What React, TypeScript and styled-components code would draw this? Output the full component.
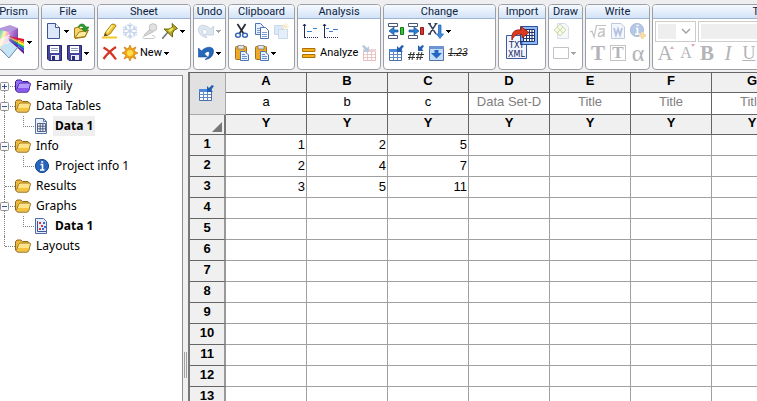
import React from "react";
import styled, { createGlobalStyle, css } from "styled-components";

const ribbonFont = 'Roboto, "Liberation Sans", sans-serif';
const treeFont = '"Noto Sans", "Open Sans", sans-serif';
const gridFont = '"Liberation Sans", Arial, sans-serif';

const GlobalStyle = createGlobalStyle`
  * { box-sizing: border-box; }
  body { margin: 0; background: #f0f0f0; color: #000; font: 12px ${treeFont}; overflow: hidden; }
  ul { list-style: none; margin: 0; padding: 0; }
  button { font: inherit; color: inherit; background: none; border: 0; padding: 0; margin: 0; }
  svg { display: block; flex: none; }
`;

/* ---------- shell ---------- */

const Window = styled.div`
  display: flex;
  flex-direction: column;
  height: 100vh;
  overflow: hidden;
  background: #f0f0f0;
`;

const TitleEdge = styled.div`
  height: 4px;
  flex: none;
  background: #eeeef0;
`;

const Ribbon = styled.header`
  display: flex;
  flex: none;
  gap: 2px;
  margin-left: -12px;
  height: 68px;
`;

const Workspace = styled.main`
  display: flex;
  flex: 1;
  min-height: 0;
`;

/* ---------- ribbon ---------- */

const Panel = styled.section<{ $width: number }>`
  flex: none;
  width: ${(p) => p.$width}px;
  height: 66px;
  border: 1px solid #9c9fa6;
  border-radius: 4px;
  background: #fff;
  overflow: hidden;
`;

const PanelTitle = styled.h2`
  margin: 0;
  height: 14px;
  border-bottom: 1px solid #9fb4d2;
  background: linear-gradient(#f6faff, #d3e3f8);
  color: #0c2340;
  font: 400 11px/14px ${ribbonFont};
  text-align: center;
  white-space: nowrap;
`;

const PanelBody = styled.div<{ $inset?: number }>`
  padding: 1px 0 0 ${(p) => p.$inset ?? 4}px;
`;

const ToolRow = styled.div<{ $gap?: number; $inset?: number }>`
  display: flex;
  align-items: center;
  height: 22px;
  gap: ${(p) => p.$gap ?? 4}px;
  padding-left: ${(p) => p.$inset ?? 0}px;
`;

const Tool = styled.button<{ $faded?: boolean }>`
  display: flex;
  align-items: center;
  gap: 2px;
  flex: none;
  opacity: ${(p) => (p.$faded ? 0.35 : 1)};
`;

const ToolText = styled.span`
  font: 11px/16px ${ribbonFont};
  white-space: nowrap;
`;

const BigTool = styled(Tool)<{ $left: number }>`
  height: 44px;
  padding-left: ${(p) => p.$left}px;
`;

const Letter = styled.button<{ $size: number; $bold?: boolean; $italic?: boolean; $underline?: boolean }>`
  position: relative;
  width: 16px;
  flex: none;
  color: #b4b4b8;
  font: ${(p) => (p.$italic ? "italic" : "normal")} ${(p) => (p.$bold ? 700 : 400)} ${(p) => p.$size}px/20px
    "Liberation Serif", serif;
  text-decoration: ${(p) => (p.$underline ? "underline" : "none")};
  text-align: center;
`;

const FramedLetter = styled(Letter)`
  height: 16px;
  border: 1px solid #c4c4c8;
  line-height: 14px;
`;

const SizeMark = styled.i<{ $down?: boolean }>`
  position: absolute;
  top: 1px;
  right: -1px;
  border: 2px solid transparent;
  ${(p) =>
    p.$down
      ? css`
          border-top: 3px solid #e0a9b5;
        `
      : css`
          border-bottom: 3px solid #e0a9b5;
        `}
`;

const FieldBox = styled.label<{ $width: number }>`
  display: flex;
  align-items: center;
  justify-content: space-between;
  flex: none;
  width: ${(p) => p.$width}px;
  height: 21px;
  padding: 0 4px 0 2px;
  border: 1px solid #ccc;
  background: #fff;
`;

const Field = styled.select<{ $width: number }>`
  appearance: none;
  width: ${(p) => p.$width}px;
  height: 15px;
  border: 0;
  background: #eee;
`;

const Caret = () => (
  <svg width="5" height="3" viewBox="0 0 5 3" shapeRendering="crispEdges">
    <path d="M0 0H5V1H4V2H3V3H2V2H1V1H0Z" fill="#000" />
  </svg>
);

/* ---------- icons ---------- */

const Svg = ({ children }: { children: React.ReactNode }) => (
  <svg width="16" height="16" viewBox="0 0 16 16" fill="none">
    {children}
  </svg>
);

const PrismIcon = () => (
  <svg width="25" height="34" viewBox="0 0 25 34">
    <defs>
      <linearGradient id="prismLeft" x1="0" y1="0" x2="1" y2="1">
        <stop offset="0" stopColor="#5cc8c0" />
        <stop offset=".3" stopColor="#fff8a8" />
        <stop offset=".5" stopColor="#f6a8c4" />
        <stop offset=".75" stopColor="#9aa8ee" />
        <stop offset="1" stopColor="#c9f0f4" />
      </linearGradient>
      <linearGradient id="prismRight" x1="0" y1="0" x2="1" y2="1">
        <stop offset="0" stopColor="#d79aee" />
        <stop offset="1" stopColor="#4c128c" />
      </linearGradient>
    </defs>
    <path d="M0 3L10 0L18 3L10 7H0Z" fill="#b498dc" />
    <path d="M0 5L9 7V33L0 24Z" fill="url(#prismLeft)" />
    <path d="M9 7L18 3V22L9 33Z" fill="url(#prismRight)" />
    <path d="M0 22L9 16L18 22L9 33Z" fill="#c5e4f6" />
    <path d="M0 14L10 9L9 18L0 21Z" fill="#fff" opacity=".6" />
    <path d="M8 11L24 14V17Z" fill="#e5122d" />
    <path d="M8 12L24 17V19Z" fill="#f98a12" />
    <path d="M8 12L24 19V21Z" fill="#f8ef26" />
    <path d="M8 13L24 21V23Z" fill="#21b34b" />
    <path d="M8 13L24 23V26Z" fill="#2353d8" />
    <path d="M8 14L24 26V29Z" fill="#5c1896" />
    <path d="M0 24L9 33L18 22" fill="none" stroke="#6e8fb4" />
  </svg>
);

const NewDocIcon = () => (
  <Svg>
    <path d="M1.500 .5H9.500L13.500 4.500V15.500H1.500Z" fill="#dce8fa" stroke="#3e5590" />
    <path d="M9.500 .5V4.500H13.500" fill="#fff" stroke="#3e5590" />
  </Svg>
);

const OpenIcon = () => (
  <Svg>
    <path d="M1.500 14V5L6 4L7 6L11 5V8L15.500 7L12 14L2 15.500Z" fill="#f3d66b" stroke="#a37a14" />
    <path d="M2 15L6 9L15 7.500L12 13.500Z" fill="#fbeb9e" stroke="#a37a14" />
    <path d="M5 4C7 0 11 0 13 4H16L12.500 9L8.500 6L11 5C10 3 8 2.500 5 4Z" fill="#27a02a" stroke="#16681a" strokeWidth=".6" />
  </Svg>
);

const DiskIcon = () => (
  <Svg>
    <path d="M1.500 .5H15.500V15.500H3L1.500 14Z" fill="#45459e" stroke="#27276b" />
    <path d="M4 1H13V8H4Z" fill="#fff" />
    <path d="M5 3.500H12M5 5.500H12" stroke="#8f97bd" />
    <path d="M5 10H13V15H5Z" fill="#e9ecf7" />
    <path d="M6 11H9V15H6Z" fill="#2e2e7c" />
  </Svg>
);

const PencilIcon = () => (
  <Svg>
    <path d="M3 10L9.500 1.500C11 .5 14 1.500 14 3L8 11L4 13Z" fill="#f2c52a" stroke="#9c7410" strokeWidth=".9" />
    <path d="M5 9.500L10.500 2.500" stroke="#fff0a0" strokeWidth="1.500" />
    <path d="M3 10L1.500 13.500L5.500 12.500Z" fill="#5b4a22" />
    <path d="M0 14.500H15" stroke="#f0c828" strokeWidth="2" />
  </Svg>
);

const SnowIcon = () => (
  <Svg>
    <path
      d="M8 0V16M1 4L15 12M1 12L15 4M5.500 1.500L8 4L10.500 1.500M5.500 14.500L8 12L10.500 14.500M1 7L4.500 6L3.500 2.500M15 9L11.500 10L12.500 13.500M15 7L11.500 6L12.500 2.500M1 9L4.500 10L3.500 13.500"
      stroke="#5c88cc"
      strokeWidth="1.400"
    />
  </Svg>
);

const MicIcon = () => (
  <Svg>
    <path d="M8 6L11 9L3 13L2 12Z" fill="#888" stroke="#555" />
    <circle cx="11" cy="4.500" r="3.800" fill="#aaa" stroke="#555" />
    <path d="M3 13C0 13 0 15.500 3 15.500H11C14 15.500 13 12 10 12.500" stroke="#666" />
  </Svg>
);

const PinIcon = () => (
  <Svg>
    <path d="M0 16L6 9" stroke="#777" strokeWidth="1.600" />
    <path d="M2 6H7L10.500 4L10 .5L15.500 5.500L12.500 7L10.500 10V14Z" fill="#b5a81c" stroke="#625a0c" strokeWidth=".9" />
    <path d="M6 7.500L10 4.500L11.500 6L8 9Z" fill="#efe66a" />
  </Svg>
);

const DeleteIcon = () => (
  <Svg>
    <path d="M1.500 2.500C6 5 11 10 14 14.500M14 2C9 5 5 9 1.500 14" stroke="#d63420" strokeWidth="2.200" />
  </Svg>
);

const StarIcon = () => (
  <Svg>
    <path
      d="M8 0L9.800 4L14 2L12 6L16 8L12 10L14 14L9.800 12L8 16L6.200 12L2 14L4 10L0 8L4 6L2 2L6.200 4Z"
      fill="#f2a616"
      stroke="#c9760c"
      strokeWidth=".7"
    />
    <circle cx="8" cy="8" r="3" fill="#ffe04c" />
  </Svg>
);

const UndoIcon = () => (
  <Svg>
    <path d="M.5 3V12H9.500L6.500 9C8 6 11.500 5.500 11.500 8C11.500 11 10 12.500 7 14.500C13 14 15.500 10 15.500 6C15.500 1 8 1 3.500 6Z" fill="#2567bd" stroke="#184a90" strokeWidth=".6" />
  </Svg>
);

const RedoIcon = () => (
  <Svg>
    <path d="M15.500 3V12H6.500L9.500 9C8 6 4.500 5.500 4.500 8C4.500 11 6 12.500 9 14.500C3 14 .5 10 .5 6C.5 1 8 1 12.500 6Z" fill="#9db8da" stroke="#5679a8" strokeWidth=".8" />
  </Svg>
);

const CutIcon = () => (
  <Svg>
    <path d="M4.500 1L10.500 10.500M12.500 1L6.500 10.500" stroke="#2b2f38" strokeWidth="1.800" />
    <ellipse cx="5" cy="12.200" rx="2.400" ry="2" stroke="#3868b8" strokeWidth="1.500" />
    <ellipse cx="12" cy="12.200" rx="2.400" ry="2" stroke="#3868b8" strokeWidth="1.500" />
  </Svg>
);

const CopyIcon = () => (
  <Svg>
    <path d="M2.500 .5H7.500L10.500 3.500V11.500H2.500Z" fill="#e8f1fd" stroke="#4a72b4" />
    <path d="M4 5.500H9M4 7.500H8M4 9.500H8" stroke="#7e9fd4" />
    <path d="M7.500 4.500H12.500L15.500 7.500V15.500H7.500Z" fill="#fff" stroke="#4a72b4" />
    <path d="M9 9.500H14M9 11.500H14M9 13.500H14" stroke="#7e9fd4" />
  </Svg>
);

const DuplicateIcon = () => (
  <Svg>
    <path d="M1.500 2.500H10V11.500H1.500Z" fill="#9bc0e8" stroke="#6a97cc" />
    <path d="M5.500 6.500H14.500V15.500H5.500Z" fill="#b8d4f0" stroke="#6a97cc" />
    <path d="M12.500 0V7M9 3.500H16M10 1L15 6M15 1L10 6" stroke="#f0c860" />
  </Svg>
);

const PasteIcon = () => (
  <Svg>
    <rect x="2.500" y="1.500" width="11" height="13" rx="1" fill="#efa928" stroke="#a86e12" />
    <path d="M5 .5H11V4H5Z" fill="#e2e4e8" stroke="#777" strokeWidth=".7" />
    <path d="M7.500 6.500H12L15.500 10V15.500H7.500Z" fill="#eaf2fe" stroke="#4a72b4" />
    <path d="M9 9.500H12M9 11.500H14M9 13.500H14" stroke="#6c90cc" />
  </Svg>
);

const AxesIcon = ({ second }: { second?: boolean }) => (
  <Svg>
    <path d="M2.500 1V15M1 3L2.500 1L4 3" stroke="#1e2d55" />
    <path d="M3 14.500H16" stroke="#1e2d55" strokeDasharray="1 1" />
    <path d={second ? "M4 5.500H7M7 8.500H11M11 6.500H16" : "M5 8.500H10M11 5.500H15"} stroke="#3f7fc8" />
  </Svg>
);

const AnalyzeIcon = () => (
  <Svg>
    <path d="M.5 3.500H13V6.500H.5ZM.5 9.500H13V12.500H.5Z" fill="#f5af18" stroke="#ab7006" />
  </Svg>
);

const TableIcon = ({ red }: { red?: boolean }) => (
  <Svg>
    <path d="M1.500 4.500H13.500V15.500H1.500Z" fill="#fff" stroke={red ? "#c84848" : "#4a70b0"} />
    <path d="M1 4H14V7H1Z" fill={red ? "#dc8080" : "#4a86dc"} />
    <path d="M5.500 5V15M9.500 5V15M2 9.500H13M2 12.500H13" stroke={red ? "#c86060" : "#6489c2"} />
    {red ? (
      <path d="M0 1L2 0L5 3L7 1V7H1L3 5Z" fill="#3566a8" />
    ) : (
      <path d="M16 1L14 0L11 3L9 1V7H15L13 5Z" fill="#245fb0" />
    )}
  </Svg>
);

const InsertIcon = ({ remove }: { remove?: boolean }) => (
  <Svg>
    <path d="M.5 .5H9.500V3.500H.5ZM.5 12.500H9.500V15.500H.5Z" fill="#fff" stroke="#4a5673" />
    {remove ? (
      <path d="M1 7H6V4L11 8L6 12V9H1Z" fill="#2b7fd0" stroke="#15539c" strokeWidth=".7" />
    ) : (
      <path d="M10 7H6V4L1 8L6 12V9H10Z" fill="#2b7fd0" stroke="#15539c" strokeWidth=".7" />
    )}
    <path d="M12.500 4.500H15.500V11.500H12.500Z" fill={remove ? "#e03434" : "#34c634"} stroke={remove ? "#8c1c1c" : "#16771a"} />
  </Svg>
);

const SortIcon = () => (
  <Svg>
    <path d="M1.500 1L8 11M8 1L1.500 11M0 .5H3M6.500 .5H9.500M0 11H3" stroke="#36425e" strokeWidth="1.400" />
    <path d="M10.500 2H13V11H15.500L12 15.500L8.500 11H10.500Z" fill="#3c8de0" stroke="#1b5cae" strokeWidth=".7" />
  </Svg>
);

const DecimalIcon = () => (
  <Svg>
    <path d="M3 7L1 15M6 7L4 15M0 9.500H7M0 12.500H7M11 7L9 15M14 7L12 15M8 9.500H16M8 12.500H15" stroke="#333" />
    <path d="M16 1L14.500 0L12 2L10 0V6H15.500L14 4Z" fill="#2a62ae" />
  </Svg>
);

const DownBoxIcon = () => (
  <Svg>
    <path d="M1.500 1.500H15.500V15.500H1.500Z" fill="#c5dcf8" stroke="#5673a8" />
    <path d="M1 1H16V4H1Z" fill="#6c94d0" />
    <path d="M6.500 5H10.500V8H14L8.500 13.500L3 8H6.500Z" fill="#2267c4" />
  </Svg>
);

const StruckNumber = styled.span`
  color: #222;
  font: italic 10px/14px ${gridFont};
  text-decoration: line-through;
`;

const ImportLabel = styled.text`
  font: 8px "DejaVu Sans", sans-serif;
  fill: #14245c;
`;

const ImportIcon = () => (
  <svg width="34" height="34" viewBox="0 0 34 34" fill="none">
    <path d="M.5 10.500H20.500V33.500H.5Z" fill="#f0f5ff" stroke="#3e58a8" />
    <path d="M14.500 1.500H31.500V19.500H14.500Z" fill="#8db8f2" stroke="#2b4f9c" />
    <path d="M17.500 4.500H28.500V16.500H17.500Z" fill="#fff" stroke="#1e3570" />
    <path d="M20.500 5V16M23.500 5V16M26 5V16M18 7.500H28M18 10.500H28M18 13.500H28" stroke="#1e3570" />
    <path d="M6 15C5 8 8 4 15 5V1.500L23 7.500L16 13V9.500C11 8.500 8 10 6 15Z" fill="#dc3a1c" stroke="#941b0c" strokeWidth=".8" />
    <ImportLabel x="3" y="23">TXT</ImportLabel>
    <ImportLabel x="2" y="32">XML</ImportLabel>
  </svg>
);

const DrawIcon = () => (
  <Svg>
    <path d="M4.500 .5H12L15.500 4V15.500H4.500Z" fill="#e6edf6" stroke="#8c9cc0" />
    <path d="M7 1L13 7L7 13L1 7Z" fill="#e2efae" stroke="#6c9828" />
    <path d="M4 4L10 10M10 4L4 10" stroke="#6c9828" />
  </Svg>
);

const RectIcon = () => (
  <Svg>
    <path d="M.5 2.500H15.500V13.500H.5Z" fill="#fff" stroke="#555" />
  </Svg>
);

const RootIcon = () => (
  <Svg>
    <path d="M0 9L2 8L4 14L6.500 2.500H16" stroke="#555" strokeWidth="1.200" />
    <path d="M9 6H14V14M14 9C8 8 7 13.500 10 13.500C12 13.500 14 11 14 9" stroke="#555" strokeWidth="1.400" />
  </Svg>
);

const WordIcon = () => (
  <Svg>
    <path d="M1.500 .5H11L14.500 4V15.500H1.500Z" fill="#dce8fa" stroke="#4d6498" />
    <path d="M4 5L6 12L8 6L10 12L12 5" stroke="#2a4ea8" strokeWidth="1.700" />
  </Svg>
);

const InfoIcon = ({ plus }: { plus?: boolean }) => (
  <Svg>
    <circle cx={plus ? 7 : 8} cy={plus ? 7 : 8} r="6.600" fill="#2765bd" stroke="#184888" />
    <path d={plus ? "M6 5.500H7.500V11M5 11H9.500M6.500 2.500H8.500" : "M6.500 6.500H8.500V12M6 12H10.500M7.200 4H9.200"} stroke="#fff" strokeWidth="1.600" />
    {plus && <path d="M12.500 9V16M9 12.500H16" stroke="#e09c10" strokeWidth="3" />}
  </Svg>
);

const ChevronIcon = () => (
  <svg width="10" height="6" viewBox="0 0 10 6" fill="none">
    <path d="M1 1L5 5L9 1" stroke="#a0a0a0" strokeWidth="1.400" />
  </svg>
);

const FolderIcon = ({ purple }: { purple?: boolean }) => (
  <Svg>
    <path
      d="M.5 12V3.500L2 2H6L7.500 3.500H13L14 5V12L12.500 14H2.500Z"
      fill={purple ? "#8f6ef0" : "#e9b93e"}
      stroke={purple ? "#3d1a9c" : "#94691a"}
    />
    <path
      d="M3.500 6.500L5 5H15L15.500 6L13.500 13L12 14H2.500L1.500 12.500Z"
      fill={purple ? "#b69cff" : "#fde48a"}
      stroke={purple ? "#4c25ad" : "#a87a20"}
    />
    <path d="M3 10H14L13 13H2.500Z" fill={purple ? "#8a58f0" : "#f5c23c"} />
  </Svg>
);

const SheetIcon = () => (
  <Svg>
    <path d="M1.500 .5H9.500L12.500 3.500V15.500H1.500Z" fill="#e8f0fb" stroke="#5875a4" />
    <path d="M9.500 .5V3.500H12.500" stroke="#5875a4" />
    <path d="M3.500 5.500H11.500V13.500H3.500ZM3.500 8.200H11.500M3.500 10.800H11.500M6.200 5.500V13.500M8.800 5.500V13.500" stroke="#4a5676" strokeWidth=".9" />
  </Svg>
);

const GraphIcon = () => (
  <Svg>
    <path d="M1.500 .5H9.500L12.500 3.500V15.500H1.500Z" fill="#e6eefc" stroke="#5169a4" />
    <path d="M3.500 3V13.500H12" stroke="#3d569c" />
    <path d="M5 4H7V6H5ZM7 7H9V9H7ZM5 10H7V12H5Z" fill="#e03430" />
    <path d="M9 4H11V6H9ZM10 8H12V10H10ZM8 10H10V12H8Z" fill="#326cd8" />
  </Svg>
);

/* ---------- navigator ---------- */

const Navigator = styled.nav`
  flex: none;
  width: 183px;
  margin-top: 3px;
  border-top: 1px solid #8c8f96;
  border-right: 1px solid #8c8f96;
  background: #fff;
`;

const Node = styled.li`
  display: flex;
  align-items: center;
  height: 20px;
`;

const Gutter = styled.span<{ $first?: boolean; $last?: boolean; $branch?: boolean }>`
  position: relative;
  flex: none;
  display: flex;
  align-items: center;
  width: 15px;
  height: 20px;
  &::before {
    content: "";
    position: absolute;
    left: 4px;
    top: ${(p) => (p.$first ? 10 : 0)}px;
    bottom: ${(p) => (p.$last ? 10 : 0)}px;
    border-left: 1px dotted #808080;
  }
  &::after {
    content: "";
    position: absolute;
    left: 5px;
    right: 0;
    top: 10px;
    border-top: ${(p) => (p.$branch ? "1px dotted #808080" : "0")};
  }
`;

const ChildGutter = styled.span`
  align-self: flex-start;
  width: 11px;
  height: 11px;
  margin-left: 8px;
  border-left: 1px dotted #808080;
  border-bottom: 1px dotted #808080;
`;

const Toggle = styled.button`
  position: relative;
  z-index: 1;
  width: 9px;
  height: 9px;
`;

const ToggleIcon = ({ open }: { open: boolean }) => (
  <svg width="9" height="9" viewBox="0 0 9 9" fill="none">
    <rect x=".5" y=".5" width="8" height="8" rx="1" fill="#f8f8f8" stroke="#919191" />
    <path d={open ? "M2 4.500H7" : "M2 4.500H7M4.500 2V7"} stroke="#34549c" />
  </svg>
);

const NodeLabel = styled.button<{ $bold?: boolean; $selected?: boolean }>`
  height: 20px;
  margin-left: 3px;
  padding: 0 2px;
  font: ${(p) => (p.$bold ? 700 : 400)} 12px/20px ${treeFont};
  background: ${(p) => (p.$selected ? "#efefef" : "none")};
  white-space: nowrap;
`;

type TreeNode = {
  label: string;
  toggle?: "open" | "closed";
  icon: React.ReactNode;
  child?: boolean;
  bold?: boolean;
  selected?: boolean;
};

const nodes: TreeNode[] = [
  { label: "Family", toggle: "closed", icon: <FolderIcon purple /> },
  { label: "Data Tables", toggle: "open", icon: <FolderIcon /> },
  { label: "Data 1", child: true, bold: true, selected: true, icon: <SheetIcon /> },
  { label: "Info", toggle: "open", icon: <FolderIcon /> },
  { label: "Project info 1", child: true, icon: <InfoIcon /> },
  { label: "Results", icon: <FolderIcon /> },
  { label: "Graphs", toggle: "open", icon: <FolderIcon /> },
  { label: "Data 1", child: true, bold: true, icon: <GraphIcon /> },
  { label: "Layouts", icon: <FolderIcon /> },
];

const Splitter = styled.div`
  flex: none;
  display: flex;
  justify-content: center;
  align-items: flex-start;
  width: 5px;
  padding-top: 280px;
`;

const Grip = styled.span`
  width: 3px;
  height: 26px;
  border: solid #a0a0a0;
  border-width: 0 1px;
`;

/* ---------- data grid ---------- */

const GridPane = styled.div`
  flex: 1;
  min-width: 0;
  overflow: hidden;
  border-left: 2px solid #777;
  border-top: 1px solid #646464;
  background: #fff;
`;

const Grid = styled.table`
  table-layout: fixed;
  width: 603px;
  border-collapse: separate;
  border-spacing: 0;
  font: 13px/15px ${gridFont};
`;

const HeadCol = styled.col`
  width: 36px;
`;

const DataCol = styled.col`
  width: 81px;
`;

const headEdge = css`
  padding: 0;
  border-right: 1px solid #646464;
  border-bottom: 1px solid #646464;
  text-align: center;
  vertical-align: top;
`;

const Corner = styled.th`
  ${headEdge}
  background: #e1e1e1;
  border-color: #a8a8a8;
  vertical-align: middle;
`;

const CornerButton = styled.button`
  display: block;
  margin: 0 auto;
  padding: 0 4px 2px 0;
`;

const SelectAll = styled.th`
  ${headEdge}
  border-right: 2px solid #777;
  background: #f0f0f0;
  vertical-align: bottom;
`;

const SelectAllButton = styled.button`
  display: block;
  margin: 0 2px 2px auto;
`;

const ColumnHead = styled.th`
  ${headEdge}
  height: 20px;
  background: #f0f0f0;
`;

const TitleCell = styled.td<{ $placeholder?: boolean }>`
  ${headEdge}
  height: 22px;
  padding-top: 1px;
  color: ${(p) => (p.$placeholder ? "#808080" : "#000")};
`;

const RowHead = styled.th`
  ${headEdge}
  height: 21px;
  border-right: 2px solid #999;
  background: #f0f0f0;
  line-height: 17px;
`;

const Cell = styled.td`
  height: 21px;
  padding: 2px 1px 0 0;
  border-right: 1px solid #a0a0a0;
  border-bottom: 1px solid #a0a0a0;
  text-align: right;
  vertical-align: top;
`;

const columns = [
  { name: "A", title: "a" },
  { name: "B", title: "b" },
  { name: "C", title: "c" },
  { name: "D", title: "Data Set-D", placeholder: true },
  { name: "E", title: "Title", placeholder: true },
  { name: "F", title: "Title", placeholder: true },
  { name: "G", title: "Title", placeholder: true },
];

const values = [
  [1, 2, 5],
  [2, 4, 7],
  [3, 5, 11],
];

const rows = Array.from({ length: 13 }, (_, i) => i);

/* ---------- app ---------- */

type GroupProps = { title: string; width: number; inset?: number; children: React.ReactNode };

const Group = ({ title, width, inset, children }: GroupProps) => (
  <Panel $width={width}>
    <PanelTitle>{title}</PanelTitle>
    <PanelBody $inset={inset}>{children}</PanelBody>
  </Panel>
);

export default function App() {
  return (
    <Window>
      <GlobalStyle />
      <TitleEdge />
      <Ribbon>
        <Group title="Prism" width={51} inset={0}>
          <BigTool $left={11} aria-label="Prism"><PrismIcon /><Caret /></BigTool>
        </Group>
        <Group title="File" width={54}>
          <ToolRow>
            <Tool aria-label="New file"><NewDocIcon /><Caret /></Tool>
            <Tool aria-label="Open"><OpenIcon /></Tool>
          </ToolRow>
          <ToolRow>
            <Tool aria-label="Save"><DiskIcon /></Tool>
            <Tool aria-label="Save as"><DiskIcon /><Caret /></Tool>
          </ToolRow>
        </Group>
        <Group title="Sheet" width={94}>
          <ToolRow>
            <Tool aria-label="Highlight"><PencilIcon /></Tool>
            <Tool $faded aria-label="Freeze"><SnowIcon /></Tool>
            <Tool $faded aria-label="Record"><MicIcon /></Tool>
            <Tool aria-label="Pin"><PinIcon /><Caret /></Tool>
          </ToolRow>
          <ToolRow>
            <Tool aria-label="Delete"><DeleteIcon /></Tool>
            <Tool><StarIcon /><ToolText>New</ToolText><Caret /></Tool>
          </ToolRow>
        </Group>
        <Group title="Undo" width={33}>
          <ToolRow><Tool $faded aria-label="Redo"><RedoIcon /><Caret /></Tool></ToolRow>
          <ToolRow><Tool aria-label="Undo"><UndoIcon /><Caret /></Tool></ToolRow>
        </Group>
        <Group title="Clipboard" width={67}>
          <ToolRow>
            <Tool aria-label="Cut"><CutIcon /></Tool>
            <Tool aria-label="Copy"><CopyIcon /></Tool>
            <Tool $faded aria-label="Duplicate"><DuplicateIcon /></Tool>
          </ToolRow>
          <ToolRow>
            <Tool aria-label="Paste"><PasteIcon /></Tool>
            <Tool aria-label="Paste special"><PasteIcon /><Caret /></Tool>
          </ToolRow>
        </Group>
        <Group title="Analysis" width={84}>
          <ToolRow>
            <Tool aria-label="Fit line"><AxesIcon /></Tool>
            <Tool aria-label="Interpolate"><AxesIcon second /></Tool>
          </ToolRow>
          <ToolRow>
            <Tool><AnalyzeIcon /><ToolText>Analyze</ToolText></Tool>
            <Tool $faded aria-label="Analysis table"><TableIcon red /></Tool>
          </ToolRow>
        </Group>
        <Group title="Change" width={113}>
          <ToolRow>
            <Tool aria-label="Insert"><InsertIcon /></Tool>
            <Tool aria-label="Remove"><InsertIcon remove /></Tool>
            <Tool aria-label="Sort"><SortIcon /><Caret /></Tool>
          </ToolRow>
          <ToolRow>
            <Tool aria-label="Format table"><TableIcon /></Tool>
            <Tool aria-label="Decimals"><DecimalIcon /></Tool>
            <Tool aria-label="Fill down"><DownBoxIcon /></Tool>
            <Tool><StruckNumber>1.23</StruckNumber></Tool>
          </ToolRow>
        </Group>
        <Group title="Import" width={48} inset={0}>
          <BigTool $left={7} aria-label="Import"><ImportIcon /></BigTool>
        </Group>
        <Group title="Draw" width={35}>
          <ToolRow><Tool $faded aria-label="Draw shape"><DrawIcon /></Tool></ToolRow>
          <ToolRow><Tool $faded aria-label="Rectangle"><RectIcon /><Caret /></Tool></ToolRow>
        </Group>
        <Group title="Write" width={65}>
          <ToolRow>
            <Tool $faded aria-label="Equation"><RootIcon /></Tool>
            <Tool $faded aria-label="Word"><WordIcon /></Tool>
            <Tool $faded aria-label="Info"><InfoIcon plus /></Tool>
          </ToolRow>
          <ToolRow>
            <Letter $size={21} $bold>T</Letter>
            <FramedLetter $size={17} $bold>T</FramedLetter>
            <Letter $size={24}>α</Letter>
          </ToolRow>
        </Group>
        <Group title="Text" width={222} inset={2}>
          <ToolRow $gap={2}>
            <FieldBox $width={41}><Field $width={18} aria-label="Font size" /><ChevronIcon /></FieldBox>
            <FieldBox $width={160}><Field $width={138} aria-label="Font" /><ChevronIcon /></FieldBox>
          </ToolRow>
          <ToolRow $gap={5} $inset={2}>
            <Letter $size={21} aria-label="Larger">A<SizeMark /></Letter>
            <Letter $size={16} aria-label="Smaller">A<SizeMark $down /></Letter>
            <Letter $size={21} $bold>B</Letter>
            <Letter $size={21} $italic>I</Letter>
            <Letter $size={18} $underline>U</Letter>
          </ToolRow>
        </Group>
      </Ribbon>

      <Workspace>
        <Navigator aria-label="Project">
          <ul>
            {nodes.map((n, i) => (
              <Node key={i}>
                <Gutter $first={i === 0} $last={i === nodes.length - 1} $branch={!n.child}>
                  {n.toggle && (
                    <Toggle aria-label={n.toggle === "open" ? "Collapse" : "Expand"}>
                      <ToggleIcon open={n.toggle === "open"} />
                    </Toggle>
                  )}
                </Gutter>
                {n.child && <ChildGutter />}
                {n.icon}
                <NodeLabel $bold={n.bold} $selected={n.selected}>{n.label}</NodeLabel>
              </Node>
            ))}
          </ul>
        </Navigator>
        <Splitter><Grip /></Splitter>
        <GridPane>
          <Grid>
            <colgroup>
              <HeadCol />
              {columns.map((c) => <DataCol key={c.name} />)}
            </colgroup>
            <thead>
              <tr>
                <Corner rowSpan={2}><CornerButton aria-label="Format data table"><TableIcon /></CornerButton></Corner>
                {columns.map((c) => <ColumnHead key={c.name}>{c.name}</ColumnHead>)}
              </tr>
              <tr>
                {columns.map((c) => <TitleCell key={c.name} $placeholder={c.placeholder}>{c.title}</TitleCell>)}
              </tr>
              <tr>
                <SelectAll>
                  <SelectAllButton aria-label="Select all">
                    <svg width="10" height="10" viewBox="0 0 10 10"><path d="M10 0V10H0Z" fill="#777" /></svg>
                  </SelectAllButton>
                </SelectAll>
                {columns.map((c) => <ColumnHead key={c.name}>Y</ColumnHead>)}
              </tr>
            </thead>
            <tbody>
              {rows.map((r) => (
                <tr key={r}>
                  <RowHead>{r + 1}</RowHead>
                  {columns.map((c, i) => <Cell key={c.name}>{values[r]?.[i]}</Cell>)}
                </tr>
              ))}
            </tbody>
          </Grid>
        </GridPane>
      </Workspace>
    </Window>
  );
}
